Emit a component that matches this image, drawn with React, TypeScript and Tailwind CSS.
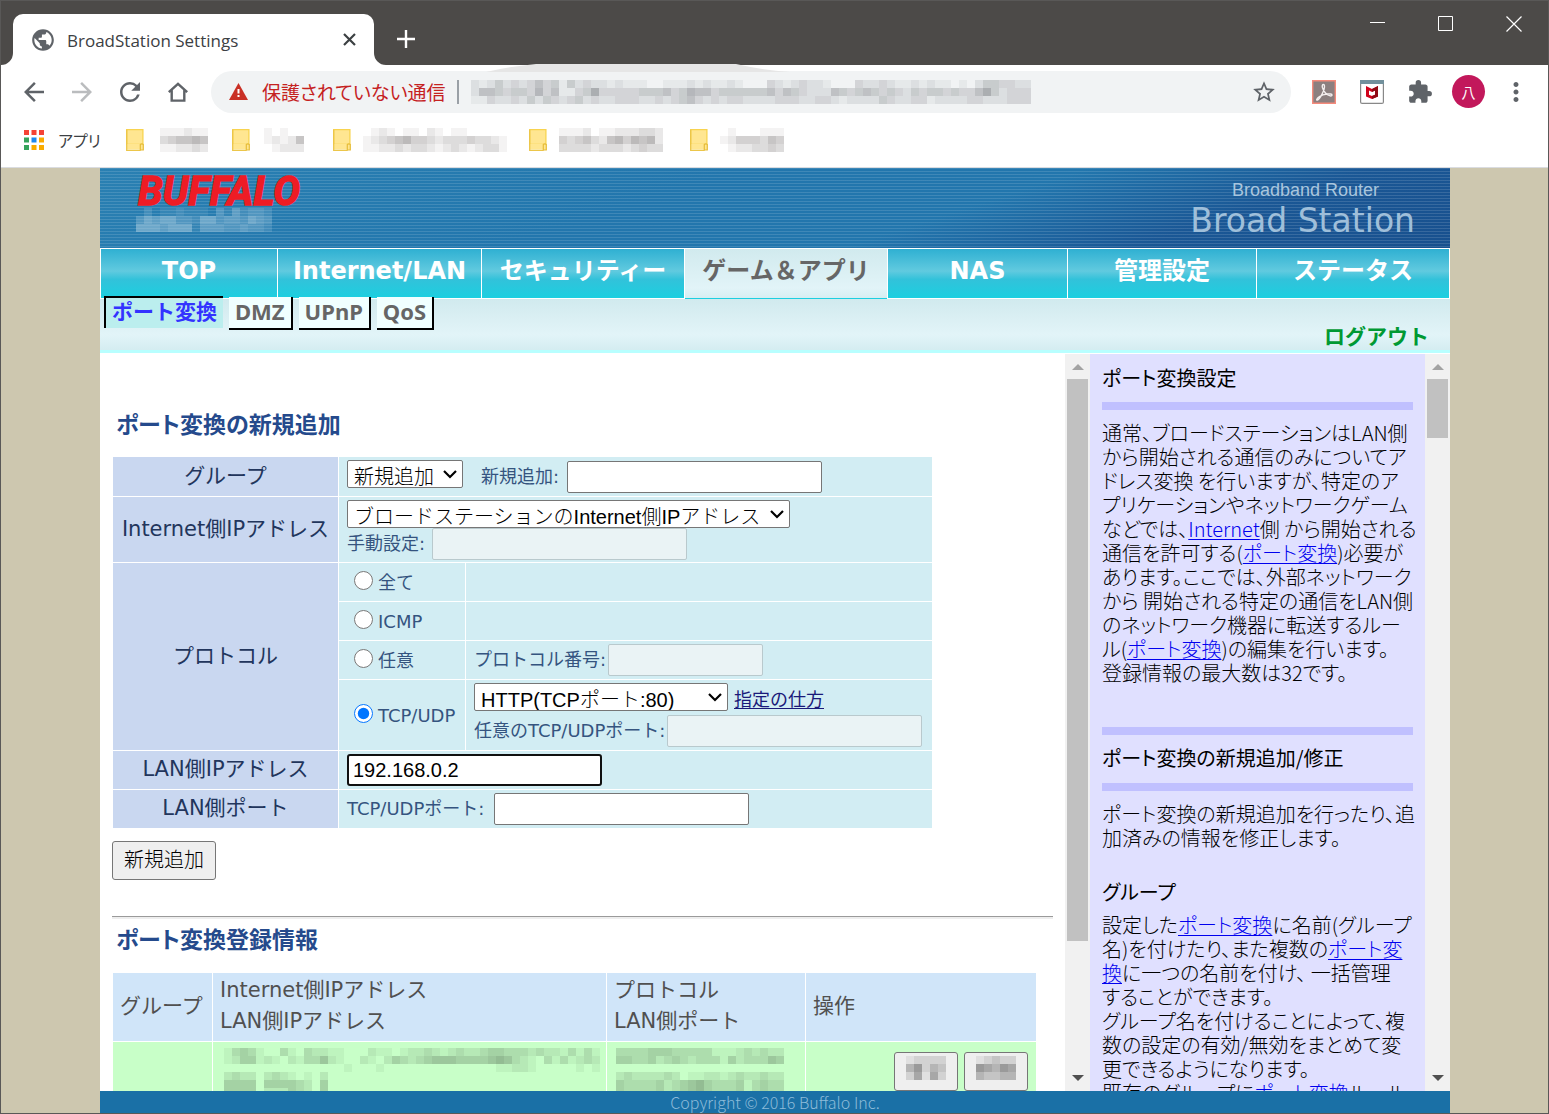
import { Fragment, type ReactNode } from "react";
import {
  MdArrowBack,
  MdArrowForward,
  MdRefresh,
  MdStarBorder,
  MdExtension,
  MdMoreVert,
  MdPublic,
} from "react-icons/md";

const UI = "font-['DejaVu_Sans','Noto_Sans_CJK_JP',sans-serif]";
const ARIAL = "font-['Liberation_Sans','Noto_Sans_CJK_JP',sans-serif]";

/* Pixelated text: each digit is the darkness (in tenths) of one 8px cell. */
function Mosaic({ rows, color, className = "" }: { rows: string[]; color: string; className?: string }) {
  const w = Math.max(...rows.map((r) => r.length)) * 8;
  const h = rows.length * 8;
  return (
    <svg
      aria-hidden="true"
      width={w}
      height={h}
      viewBox={`0 0 ${w} ${h}`}
      shapeRendering="crispEdges"
      className={`shrink-0 ${className}`}
    >
      {rows.map((row, y) =>
        row.split("").map((c, x) => (
          <rect key={`${x}-${y}`} x={x * 8} y={y * 8} width="8" height="8" fill={color} opacity={Number(c) / 10} />
        )),
      )}
    </svg>
  );
}

function Folder() {
  return (
    <svg aria-hidden="true" width="18" height="22" viewBox="0 0 18 22" className="shrink-0">
      <path d="M.7.7h16.2v14.600H.7z" fill="#ffe691" stroke="#f8d34f" strokeWidth="1.3" />
      <path d="M1 15h15.500v5.500H1z" fill="#ffe691" />
      <path d="M.7.7v20.600h14" fill="none" stroke="#ecc64a" strokeWidth="1.3" />
      <path d="M14.300 21v-5.500q1.500-1.500 3 0V21z" fill="#ffe691" stroke="#e6bd3a" strokeWidth="1.2" />
    </svg>
  );
}

function AppsGrid() {
  const colors = ["#f44336", "#f44336", "#f44336", "#34a35b", "#1e88f0", "#f9ab00", "#34a35b", "#f9ab00", "#f9ab00"];
  return (
    <svg aria-hidden="true" width="20" height="20" viewBox="0 0 20 20" className="shrink-0">
      {colors.map((c, i) => (
        <rect key={i} x={(i % 3) * 7.5} y={Math.floor(i / 3) * 7.5} width="5" height="5" fill={c} />
      ))}
    </svg>
  );
}

function TitleBar() {
  return (
    <div className="flex h-16 shrink-0 items-stretch bg-[#4c4a48] text-white">
      <div className="relative ml-3 mt-[13px] flex w-[361px] items-center rounded-t-[10px] bg-white pl-[17px] pr-[17px]">
        <svg aria-hidden="true" width="12" height="12" viewBox="0 0 12 12" className="absolute -left-3 bottom-0">
          <path d="M12 0v12H0A12 12 0 0 0 12 0z" fill="#fff" />
        </svg>
        <svg aria-hidden="true" width="12" height="12" viewBox="0 0 12 12" className="absolute -right-3 bottom-0">
          <path d="M0 0v12h12A12 12 0 0 1 0 0z" fill="#fff" />
        </svg>
        <MdPublic size={26} color="#5f6368" className="shrink-0" />
        <span className="ml-[11px] flex-1 pt-0.5 font-['Open_Sans','Noto_Sans',sans-serif] text-[17px] leading-6 text-[#3c4043]">
          BroadStation Settings
        </span>
        <button aria-label="Close tab" className="flex h-4 w-4 items-center justify-center">
          <svg width="13" height="13" viewBox="0 0 13 13">
            <path d="M1 1l11 11M12 1L1 12" stroke="#3c4043" strokeWidth="2.2" />
          </svg>
        </button>
      </div>
      <button aria-label="New tab" className="ml-[23px] mt-3 self-center">
        <svg width="18" height="18" viewBox="0 0 18 18" className="block">
          <path d="M9 0v18M0 9h18" stroke="#fff" strokeWidth="2.4" />
        </svg>
      </button>
      <div className="ml-auto mr-[26px] mt-[15px] flex h-4 items-center gap-[52px]">
        <button aria-label="Minimize">
          <svg width="16" height="16" viewBox="0 0 16 16" className="block">
            <path d="M0 6.5h15" stroke="#fff" />
          </svg>
        </button>
        <button aria-label="Maximize">
          <svg width="16" height="16" viewBox="0 0 16 16" className="block">
            <path d="M.5.5h14v14H.5z" fill="none" stroke="#fff" />
          </svg>
        </button>
        <button aria-label="Close">
          <svg width="16" height="16" viewBox="0 0 16 16" className="block">
            <path d="M.5.5l15 15M15.500.5l-15 15" stroke="#fff" strokeWidth="1.2" />
          </svg>
        </button>
      </div>
    </div>
  );
}

function Toolbar() {
  return (
    <div className="flex h-[53px] shrink-0 items-center bg-white pl-[18px] pr-[17px] text-[#5f6368]">
      <div className="flex items-center gap-[18px]">
        <button aria-label="Back"><MdArrowBack size={30} /></button>
        <button aria-label="Forward" className="text-[#babcbe]"><MdArrowForward size={30} /></button>
        <button aria-label="Reload"><MdRefresh size={30} /></button>
        <button aria-label="Home" className="pl-[5px] pr-0.5">
          <svg width="20" height="20" viewBox="0 0 20 20" className="block">
            <path d="M3.700 8v10.600h12.600V8M.8 10.200L10 1.800l9.200 8.400" fill="none" stroke="currentColor" strokeWidth="2.400" />
          </svg>
        </button>
      </div>
      <div className="relative ml-[21px] flex h-[42px] flex-1 items-center rounded-full bg-[#f1f3f4] pl-[18px] pr-3.5">
        <svg aria-hidden="true" width="304" height="8" viewBox="0 0 304 8" className="absolute left-[275px] top-[-7px]">
          <path d="M0 8Q20 3 50 0H250Q276 6 304 8z" fill="#e6e6e6" />
        </svg>
        <svg aria-hidden="true" width="19" height="17" viewBox="0 0 19 17" className="shrink-0">
          <path d="M9.5 0L19 17H0z" fill="#c93025" />
          <path d="M8.5 6h2v4.500h-2zM8.500 12h2v2h-2z" fill="#fff" />
        </svg>
        <span className="ml-3.5 whitespace-nowrap font-['Noto_Sans_CJK_JP',sans-serif] text-[19px] leading-7 text-[#c5221f] [font-feature-settings:'palt']">
          保護されていない通信
        </span>
        <span className="ml-3 h-6 w-0.5 bg-[#9aa0a6]" />
        <Mosaic
          className="ml-3"
          color="#8d9094"
          rows={[
            "2124232353414232212111001112121121000321232210003223211212110102443322",
            "2554344363511347333334445346553444444535432225434543432434434335742333",
            "1132232424323423223332232345323233222233322332122224322331222233222333",
          ]}
        />
        <button aria-label="Bookmark this page" className="ml-auto"><MdStarBorder size={26} /></button>
      </div>
      <div className="ml-[21px] flex items-center gap-6">
        <svg aria-label="Adobe Acrobat" width="24" height="24" viewBox="0 0 24 24">
          <path d="M.7.7h22.6v22.600H.7z" fill="#8c7f7f" stroke="#f58a7b" strokeWidth="1.4" />
          <path
            d="M11.500 4.500c-2.500 0-1 5.500 2 8.500 2.500 2.500 6.500 4 6.500 2 0-2-8.500-1.200-12.500 1.500-3 2-3.500 4-2 3.500 2.500-1 7-9.500 7-13 0-1.500-.3-2.500-1-2.500z"
            fill="none"
            stroke="#f4eeee"
            strokeWidth="1.4"
          />
        </svg>
        <svg aria-label="McAfee" width="24" height="24" viewBox="0 0 24 24">
          <rect x=".6" y=".6" width="22.800" height="22.800" rx="1.500" fill="#fff" stroke="#888" strokeWidth="1.2" />
          <path d="M0 0h24v4H0z" fill="#72909c" />
          <path d="M6 6l6 3 6-3v10.500L12 19l-6-2.500zM9 10.500v4.300l3 1.200 3-1.200v-4.300L12 12z" fill="#d0021b" fillRule="evenodd" />
          <path d="M18 6v10.500L12 19v-3l3-1.200v-4.300L12 12V9z" fill="#8f0a14" />
        </svg>
        <button aria-label="Extensions" className="-mx-px"><MdExtension size={26} /></button>
        <button className="-ml-1 flex h-[33px] w-[33px] items-center justify-center rounded-full bg-[#c2185b] font-['Noto_Sans_CJK_JP',sans-serif] text-sm text-white">
          八
        </button>
        <button aria-label="Menu" className="-ml-2"><MdMoreVert size={30} /></button>
      </div>
    </div>
  );
}

const bookmarks = [
  { gap: "ml-4", w: "w-[106px]", rows: ["111211", "345565", "112232"] },
  { gap: "ml-3.5", w: "w-[101px]", rows: ["10100", "12125", "01222"] },
  { gap: "ml-3", w: "w-[196px]", rows: ["012101102101100000", "123456443233343321", "112232332123212331"] },
  { gap: "ml-3", w: "w-[161px]", rows: ["1112011222332", "4345325646562", "3333233323433"] },
  { gap: "ml-3", w: "w-[100px]", rows: ["01000111", "12444354", "01223343"] },
];

function BookmarksBar() {
  return (
    <div className="flex h-[50px] shrink-0 items-center border-b border-[#dadce0] bg-white pb-1.5 pl-[23px]">
      <AppsGrid />
      <a href="#apps" className="ml-3.5 w-[68px] font-['Noto_Sans_CJK_JP',sans-serif] text-base leading-6 text-[#3c4043] [font-feature-settings:'palt']">
        アプリ
      </a>
      {bookmarks.map((b, i) => (
        <div key={i} className={`flex items-center ${b.w}`}>
          <Folder />
          <Mosaic className={b.gap} color="#908c8c" rows={b.rows} />
        </div>
      ))}
    </div>
  );
}

function Banner() {
  return (
    <header className="flex h-20 shrink-0 items-start justify-between bg-[repeating-linear-gradient(to_bottom,rgba(255,255,255,0.13)_0_1px,transparent_1px_3px),linear-gradient(162deg,#2a80b2,#2276ad_40%,#2276ad_62%,#1a5795_80%,#18508e)] pl-9 pr-[35px]">
      <div>
        <div className="mt-1.5 h-[34px] pl-0.5 font-['Liberation_Sans_Narrow','Roboto',sans-serif] text-[40px] font-bold italic leading-[36px] text-[#ee1c25] [-webkit-text-stroke:1.5px_#ee1c25]">
          BUFFALO
        </div>
        <Mosaic color="#b5d3e4" rows={["02011211103142332", "35455332553443543", "55545551444334332"]} />
      </div>
      <div className="pt-3 text-right">
        <div className="pr-9 font-['Liberation_Sans',sans-serif] text-lg leading-5 text-[#a9c6de]">Broadband Router</div>
        <div className="font-['DejaVu_Sans',sans-serif] text-[33px] leading-[42px] text-[#9fbfda]">Broad Station</div>
      </div>
    </header>
  );
}

const tabs = ["TOP", "Internet/LAN", "セキュリティー", "ゲーム＆アプリ", "NAS", "管理設定", "ステータス"];

function Nav() {
  return (
    <nav className={`grid shrink-0 grid-cols-[176fr_203fr_202fr_202fr_179fr_188fr_192fr] gap-px bg-white p-px text-2xl font-bold ${UI}`}>
      {tabs.map((t) => (
        <a
          key={t}
          href="#tab"
          className={
            t === "ゲーム＆アプリ"
              ? "-mb-px flex h-[50px] items-start justify-center whitespace-nowrap border-b border-[#1ccfe0] bg-linear-to-b from-[#d1eaee] via-[#e2f4f8] via-80% to-[#d6eef2] pt-1.5 leading-8 text-[#666]"
              : "flex h-[49px] items-start justify-center whitespace-nowrap bg-[linear-gradient(#2fb0d2,#61cadf_45%,#32c2da_62%,#1ccfe0)] pt-1.5 leading-8 text-white"
          }
        >
          {t}
        </a>
      ))}
    </nav>
  );
}

function SubNav() {
  return (
    <div className={`flex h-[54px] shrink-0 items-start justify-between border-b-[3px] border-[#b8ffff] bg-linear-to-b from-[#d1eaee] via-[#e2f4f8] via-70% to-[#d4edf1] pl-1 pr-[21px] font-bold ${UI}`}>
      <div className="-mt-[3px] flex gap-1.5">
        <a href="#port" className="h-8 border-l-2 border-t-2 border-black bg-[#bbeeee] px-1.5 text-[21px] leading-7 text-[#3333ff]">
          ポート変換
        </a>
        {["DMZ", "UPnP", "QoS"].map((t) => (
          <a
            key={t}
            href="#sub"
            className="mt-px h-[33px] border-b-2 border-r-2 border-black bg-[#f0ffff] px-1.5 font-['Noto_Sans',sans-serif] text-[22px] leading-7 text-[#666]"
          >
            {t}
          </a>
        ))}
      </div>
      <a href="#logout" className="mt-[22px] text-[21px] leading-8 text-[#009933]">ログアウト</a>
    </div>
  );
}

function Scrollbar({ thumb }: { thumb: string }) {
  return (
    <div aria-hidden="true" className="flex w-[25px] shrink-0 flex-col items-center bg-[#f1f1f1]">
      <div className="flex h-[25px] shrink-0 items-center">
        <svg width="12" height="6" viewBox="0 0 12 6"><path d="M6 0l6 6H0z" fill="#a3a3a3" /></svg>
      </div>
      <div className="min-h-0 w-full flex-1 px-0.5">
        <div className={`w-full bg-[#c1c1c1] ${thumb}`} />
      </div>
      <div className="flex h-[27px] shrink-0 items-center">
        <svg width="12" height="6" viewBox="0 0 12 6"><path d="M0 0h12L6 6z" fill="#505050" /></svg>
      </div>
    </div>
  );
}

function Select({ label, value, width }: { label: string; value: string; width: string }) {
  return (
    <span className={`relative inline-block align-top ${width}`}>
      <select
        aria-label={label}
        className={`block h-7 w-full appearance-none overflow-hidden rounded-xs border border-[#767676] bg-white pl-1.5 pr-6 pt-1 text-xl font-light leading-6 text-black ${ARIAL}`}
      >
        <option>{value}</option>
      </select>
      <svg aria-hidden="true" width="14" height="9" viewBox="0 0 14 9" className="pointer-events-none absolute right-1.5 top-2.5">
        <path d="M1 1l6 6 6-6" fill="none" stroke="#000" strokeWidth="2.2" />
      </svg>
    </span>
  );
}

const field = `h-8 rounded-xs border border-[#767676] bg-white px-1.5 text-xl text-black disabled:border-[#b9c9cd] disabled:bg-[#eaf3f5] ${ARIAL}`;

function Th({ children, rowSpan }: { children: ReactNode; rowSpan?: number }) {
  return (
    <th scope="row" rowSpan={rowSpan} className="w-[225px] whitespace-nowrap bg-[#c9d7f0] p-0 pb-0.5 text-[21px] font-normal leading-7 text-[#22355c]">
      {children}
    </th>
  );
}

function Radio({ id, children, checked }: { id: string; children: string; checked?: boolean }) {
  return (
    <td className="w-[126px] bg-[#d2edf3] p-0 pl-[15px]">
      <div className="flex items-center gap-[5px]">
        <input id={id} name="protocol" type="radio" defaultChecked={checked} className="mb-1 h-[19px] w-[19px] accent-[#0075ff]" />
        <label htmlFor={id} className="pt-0.5 leading-7">{children}</label>
      </div>
    </td>
  );
}

function AddForm() {
  const cell = "bg-[#d2edf3] p-0 pl-2";
  return (
    <form onSubmit={(e) => e.preventDefault()}>
      <table className="border-separate border-spacing-px text-lg text-[#35547f]">
        <tbody>
          <tr className="h-[39px]">
            <Th>グループ</Th>
            <td colSpan={2} className={cell}>
              <div className="flex items-center">
                <div className="mb-1.5"><Select label="グループ" value="新規追加" width="w-[116px]" /></div>
                <label htmlFor="newgroup" className="ml-[18px] mr-2">新規追加:</label>
                <input id="newgroup" className={`${field} w-[255px]`} />
              </div>
            </td>
          </tr>
          <tr className="h-[65px]">
            <Th>Internet側IPアドレス</Th>
            <td colSpan={2} className={cell}>
              <div><Select label="Internet側IPアドレス" value="ブロードステーションのInternet側IPアドレス" width="w-[443px]" /></div>
              <div className="flex items-center">
                <label htmlFor="manual" className="mr-[7px] leading-7">手動設定:</label>
                <input id="manual" disabled className={`${field} w-[255px]`} />
              </div>
            </td>
          </tr>
          <tr className="h-[38px]">
            <Th rowSpan={4}>プロトコル</Th>
            <Radio id="p-all">全て</Radio>
            <td className={`${cell} w-[466px]`} />
          </tr>
          <tr className="h-[38px]">
            <Radio id="p-icmp">ICMP</Radio>
            <td className={cell} />
          </tr>
          <tr className="h-[38px]">
            <Radio id="p-any">任意</Radio>
            <td className={cell}>
              <div className="flex items-center gap-0.5">
                <label htmlFor="pno">プロトコル番号:</label>
                <input id="pno" disabled className={`${field} w-[155px]`} />
              </div>
            </td>
          </tr>
          <tr className="h-[70px]">
            <Radio id="p-tcp" checked>TCP/UDP</Radio>
            <td className={cell}>
              <div className="flex h-8">
                <Select label="TCP/UDPポート" value="HTTP(TCPポート:80)" width="w-[254px]" />
                <a href="#howto" className="ml-1.5 mt-[3px] leading-7 text-[#1a1a7a] underline underline-offset-2">指定の仕方</a>
              </div>
              <div className="flex items-center gap-0.5">
                <label htmlFor="anyport">任意のTCP/UDPポート:</label>
                <input id="anyport" disabled className={`${field} w-[255px]`} />
              </div>
            </td>
          </tr>
          <tr className="h-[38px]">
            <Th>LAN側IPアドレス</Th>
            <td colSpan={2} className={cell}>
              <input
                aria-label="LAN側IPアドレス"
                defaultValue="192.168.0.2"
                className={`block h-8 w-[255px] rounded-[3px] border-2 border-[#101010] bg-white px-1 text-xl text-black ${ARIAL}`}
              />
            </td>
          </tr>
          <tr className="h-[38px]">
            <Th>LAN側ポート</Th>
            <td colSpan={2} className={cell}>
              <div className="flex items-center">
                <label htmlFor="lanport" className="mr-2.5">TCP/UDPポート:</label>
                <input id="lanport" className={`${field} w-[255px]`} />
              </div>
            </td>
          </tr>
        </tbody>
      </table>
      <button className={`mt-3 h-[39px] w-[104px] rounded-[3px] border border-[#767676] bg-[#efefef] pb-0.5 text-xl font-light text-black ${ARIAL}`}>
        新規追加
      </button>
    </form>
  );
}

function Entries() {
  const th = "bg-[#d0e5f9] p-0 pb-0.5 px-[7px] text-left text-[21px] font-normal leading-[31px] text-[#505050] whitespace-nowrap";
  const td = "bg-[#c8ffc8] p-0 align-top";
  return (
    <table className="border-separate border-spacing-px">
      <thead>
        <tr className="h-[68px]">
          <th className={`${th} w-[99px]`}>グループ</th>
          <th className={`${th} w-[393px]`}>Internet側IPアドレス<br />LAN側IPアドレス</th>
          <th className={`${th} w-[198px]`}>プロトコル<br />LAN側ポート</th>
          <th className={`${th} w-[230px]`}>操作</th>
        </tr>
      </thead>
      <tbody>
        <tr className="h-[90px]">
          <td className={td} />
          <td className={`${td} pl-[11px] pt-1.5`}>
            <Mosaic
              color="#6f8f6f"
              rows={[
                "13431003103221100021101223212322344333232213131",
                "12441210213352100210243234555444456532103131232",
                "00000000000000010001000000000000001122100000101",
                "2322023210102",
                "4444044443204",
                "4444022243204",
              ]}
            />
          </td>
          <td className={`${td} pl-[9px] pt-1.5`}>
            <Mosaic
              color="#6f8f6f"
              rows={[
                "333344433333111232322",
                "443342343233314233354",
                "000000000000000000000",
                "232222320112212322322",
                "433334234564333413433",
                "433334234564333413433",
              ]}
            />
          </td>
          <td className={td}>
            <div className="flex justify-end gap-1.5 pr-2 pt-[10px]">
              <button aria-label="編集" className="flex h-[39px] w-16 justify-center rounded-[3px] border border-[#767676] bg-[#efefef] pt-[3px]">
                <Mosaic color="#606060" rows={["12222", "46243", "25152"]} />
              </button>
              <button aria-label="削除" className="flex h-[39px] w-16 justify-center rounded-[3px] border border-[#767676] bg-[#efefef] pt-[3px]">
                <Mosaic color="#606060" rows={["12322", "65465", "43344"]} />
              </button>
            </div>
          </td>
        </tr>
      </tbody>
    </table>
  );
}

function Lines({ lines, className }: { lines: ReactNode[]; className: string }) {
  return (
    <p className={`whitespace-nowrap ${className}`}>
      {lines.map((l, i) => (
        <Fragment key={i}>
          {l}
          {i < lines.length - 1 && <br />}
        </Fragment>
      ))}
    </p>
  );
}

function L({ children }: { children: string }) {
  return <a href="#help" className="text-[#0000ee] underline decoration-1 underline-offset-2">{children}</a>;
}

function Help() {
  return (
    <aside className="min-w-0 flex-1 overflow-hidden bg-[#e0e0ff] px-3 pt-3 font-['Noto_Sans_CJK_JP',sans-serif] text-xl font-light leading-6 text-black [font-feature-settings:'palt']">
      <h3 className="font-normal">ポート変換設定</h3>
      <div className="mt-3 h-2 bg-[#c0c0ff]" />
      <Lines
        className="mt-[11px]"
        lines={[
          "通常、ブロードステーションはLAN側",
          "から開始される通信のみについてア",
          "ドレス変換 を行いますが、特定のア",
          "プリケーションやネットワークゲーム",
          <>などでは、<L>Internet</L>側 から開始される</>,
          <>通信を許可する(<L>ポート変換</L>)必要が</>,
          "あります。ここでは、外部ネットワーク",
          "から 開始される特定の通信をLAN側",
          "のネットワーク機器に転送するルー",
          <>ル(<L>ポート変換</L>)の編集を行います。</>,
          "登録情報の最大数は32です。",
        ]}
      />
      <div className="mt-[42px] h-2 bg-[#c0c0ff]" />
      <h3 className="mt-[11px] font-normal">ポート変換の新規追加/修正</h3>
      <div className="mt-[13px] h-2 bg-[#c0c0ff]" />
      <Lines className="mt-[11px]" lines={["ポート変換の新規追加を行ったり、追", "加済みの情報を修正します。"]} />
      <h4 className="mt-[30px] font-normal">グループ</h4>
      <Lines
        className="mt-[9px]"
        lines={[
          <>設定した<L>ポート変換</L>に名前(グループ</>,
          <>名)を付けたり、また複数の<L>ポート変</L></>,
          <><L>換</L>に一つの名前を付け、 一括管理</>,
          "することができます。",
          "グループ名を付けることによって、複",
          "数の設定の有効/無効をまとめて変",
          "更できるようになります。",
          <>既存のグループに<L>ポート変換</L>ルール</>,
        ]}
      />
    </aside>
  );
}

export default function App() {
  return (
    <div className="flex h-screen flex-col border border-[#595857] bg-[#cdc7af]">
      <TitleBar />
      <Toolbar />
      <BookmarksBar />
      <div className="flex min-h-0 flex-1 justify-center pl-px">
        <div className="flex w-full max-w-[1350px] flex-col bg-white">
          <Banner />
          <Nav />
          <SubNav />
          <div className="flex min-h-0 flex-1 pt-px">
            <main className={`min-w-0 flex-1 overflow-hidden px-3 ${UI}`}>
              <h2 className="mb-[15px] mt-[55px] pl-1 text-[23px] font-bold leading-8 text-[#254a8c] [font-feature-settings:'palt']">
                ポート変換の新規追加
              </h2>
              <AddForm />
              <hr className="mt-9 h-[3px] border-b-2 border-t border-b-[#eeeeee] border-t-[#9a9a9a]" />
              <h2 className="mb-4 mt-[5px] pl-1 text-[23px] font-bold leading-8 text-[#254a8c] [font-feature-settings:'palt']">
                ポート変換登録情報
              </h2>
              <Entries />
            </main>
            <Scrollbar thumb="h-[82%]" />
            <div className="flex w-[360px] shrink-0">
              <Help />
              <Scrollbar thumb="h-[59px]" />
            </div>
          </div>
          <footer className="shrink-0 bg-[#1a70a6] text-center font-['Noto_Sans_CJK_JP',sans-serif] text-base font-light leading-[22px] text-[#8cbbd9]">
            Copyright © 2016 Buffalo Inc.
          </footer>
        </div>
      </div>
    </div>
  );
}
